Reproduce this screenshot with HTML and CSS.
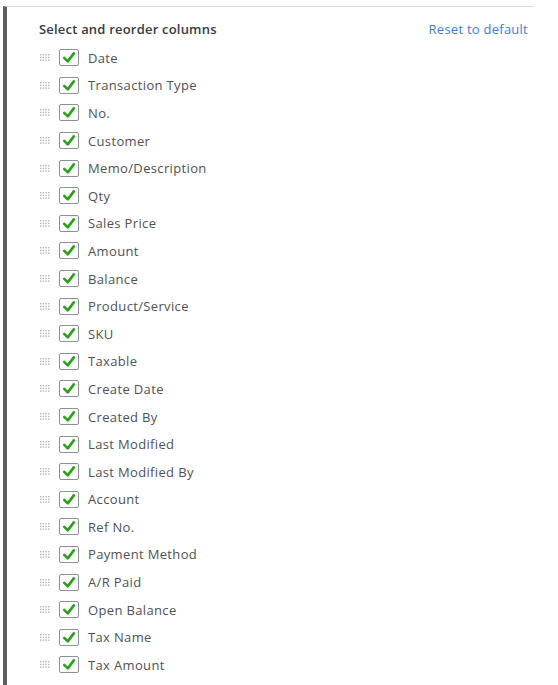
FILE: index.html
```html
<!DOCTYPE html>
<html lang="en">
<head>
    <meta charset="UTF-8">
    <title>Select and reorder columns</title>
    <link rel="stylesheet" href="styles.css">
</head>
<body>
    <!-- Spalten-Auswahl Panel -->
    <div class="panel">
        <div class="panel-header">
            <span class="panel-title">Select and reorder columns</span>
            <a class="reset-link" href="#">Reset to default</a>
        </div>
        <ul class="column-list" id="columns"></ul>
    </div>

    <script>
        const columns = [
            'Date', 'Transaction Type', 'No.', 'Customer', 'Memo/Description', 'Qty',
            'Sales Price', 'Amount', 'Balance', 'Product/Service', 'SKU', 'Taxable',
            'Create Date', 'Created By', 'Last Modified', 'Last Modified By', 'Account',
            'Ref No.', 'Payment Method', 'A/R Paid', 'Open Balance', 'Tax Name', 'Tax Amount'
        ];

        const grip = '<svg class="grip" width="10" height="7" viewBox="0 0 10 7">' +
            [0, 1, 2].map(r => [0, 1, 2, 3].map(c =>
                `<rect x="${c * 2.7}" y="${r * 2.7}" width="1.4" height="1.4" fill="#b3b5b8"/>`).join('')).join('') +
            '</svg>';

        const check = '<svg class="check" width="20" height="17" viewBox="0 0 20 17">' +
            '<path d="M5.2 8.8 L8.8 12.4 L14.8 4.4" fill="none" stroke="#2ca01c" stroke-width="2.6" stroke-linecap="round" stroke-linejoin="round"/>' +
            '</svg>';

        const list = document.getElementById('columns');
        columns.forEach(name => {
            const row = document.createElement('li');
            row.className = 'column-row';
            row.innerHTML = `${grip}<span class="checkbox">${check}</span><span class="column-name">${name}</span>`;
            list.appendChild(row);
        });
    </script>
</body>
</html>
```

FILE: styles.css
```css
body {
    margin: 0;
    background: #ffffff;
    font-family: "Open Sans", "Liberation Sans", sans-serif;
    color: #505154;
}

/* Panel */
.panel {
    margin: 6px 0 0 3px;
    width: 531px;
    min-height: 679px;
    border-left: 4px solid #5e5f61;
    border-top: 1px solid #dcdcdf;
    padding: 12px 0 0 32px;
    box-sizing: border-box;
}

.panel-header {
    display: flex;
    justify-content: space-between;
    align-items: center;
    height: 20px;
    padding-right: 6px;
}
.panel-title {
    font-size: 13px;
    font-weight: 600;
    letter-spacing: 0.2px;
    color: #393a3d;
}
.reset-link {
    font-size: 13px;
    letter-spacing: 0.25px;
    color: #3f7dd3;
    text-decoration: none;
}

/* Liste */
.column-list {
    list-style: none;
    margin: 5px 0 0 0;
    padding: 0;
}
.column-row {
    display: flex;
    align-items: center;
    height: 27.6px;
    font-size: 13px;
    letter-spacing: 0.35px;
}
.grip {
    margin: 0 9px 0 1px;
}
.checkbox {
    width: 20px;
    height: 17px;
    border: 1px solid #8d9096;
    border-radius: 2px;
    box-sizing: border-box;
    display: flex;
    align-items: center;
    justify-content: center;
    margin-right: 9px;
}
.check {
    display: block;
    flex-shrink: 0;
}
```
